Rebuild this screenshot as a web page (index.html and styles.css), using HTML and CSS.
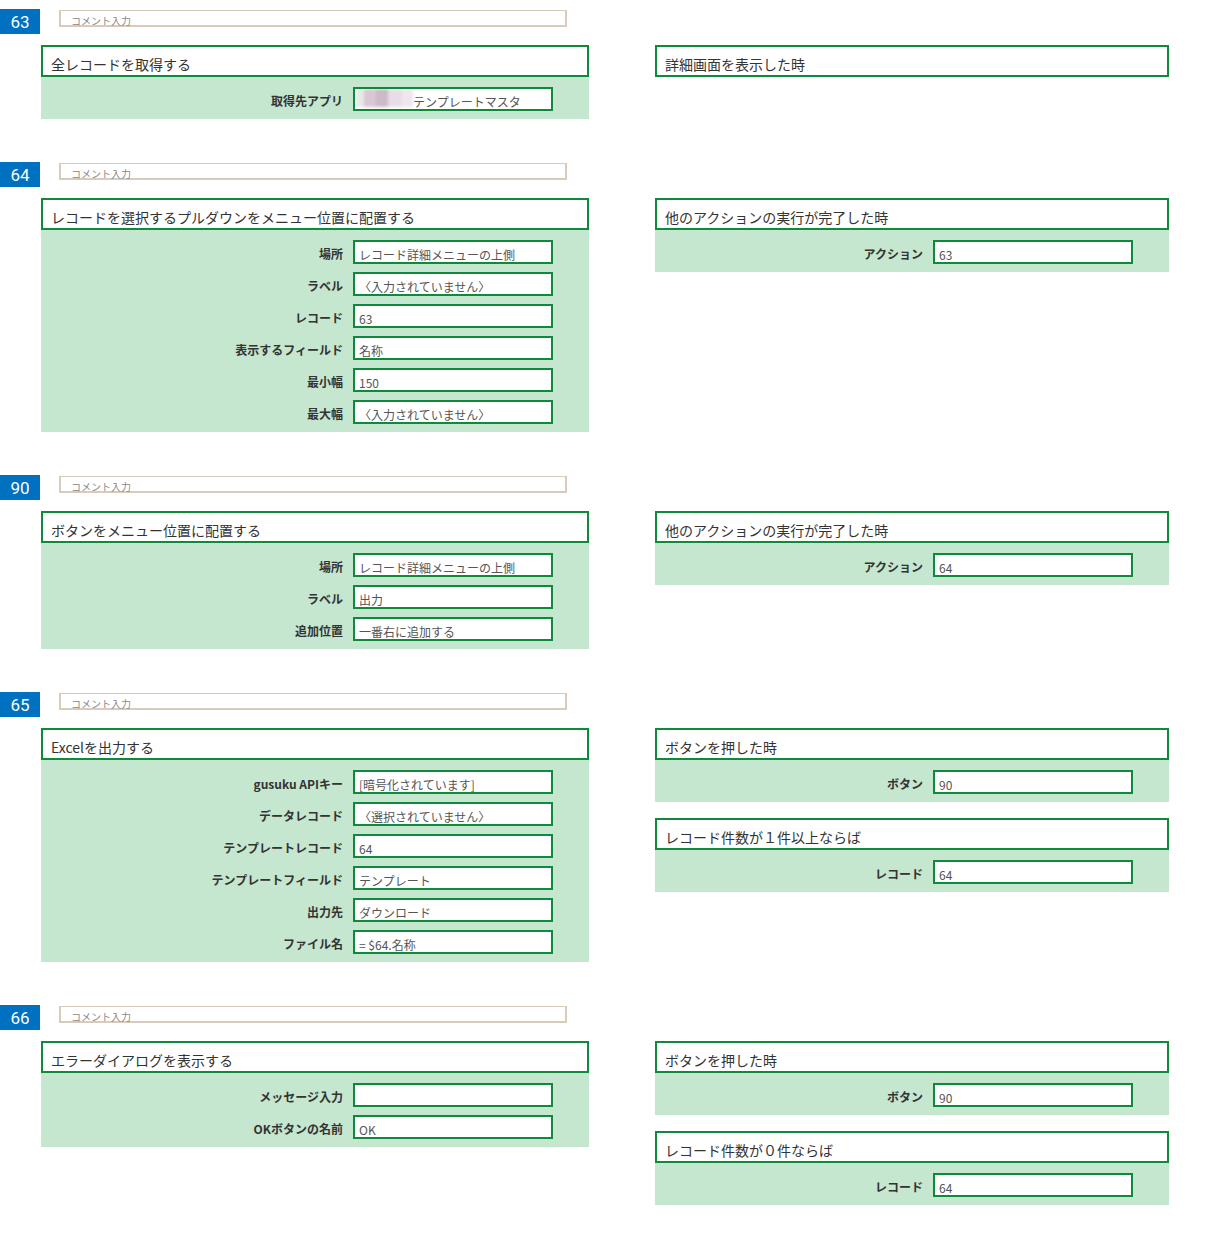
FILE: index.html
```html
<!DOCTYPE html>
<html lang="ja">
<head>
    <meta charset="UTF-8">
    <meta name="viewport" content="width=device-width, initial-scale=1.0">
    <title>アクション一覧</title>
    <link rel="stylesheet" href="styles.css">
</head>
<body>
    <!-- 63 -->
    <section class="step">
        <div class="step-head">
            <span class="step-no">63</span>
            <div class="comment">コメント入力</div>
        </div>
        <div class="step-body">
            <div class="card card-action">
                <div class="card-title">全レコードを取得する</div>
                <div class="card-fields">
                    <div class="field">
                        <span class="field-label">取得先アプリ</span>
                        <div class="field-value"><span class="masked"></span>テンプレートマスタ</div>
                    </div>
                </div>
            </div>
            <div class="triggers">
                <div class="card">
                    <div class="card-title">詳細画面を表示した時</div>
                </div>
            </div>
        </div>
    </section>

    <!-- 64 -->
    <section class="step">
        <div class="step-head">
            <span class="step-no">64</span>
            <div class="comment">コメント入力</div>
        </div>
        <div class="step-body">
            <div class="card card-action">
                <div class="card-title">レコードを選択するプルダウンをメニュー位置に配置する</div>
                <div class="card-fields">
                    <div class="field"><span class="field-label">場所</span><div class="field-value">レコード詳細メニューの上側</div></div>
                    <div class="field"><span class="field-label">ラベル</span><div class="field-value">〈入力されていません〉</div></div>
                    <div class="field"><span class="field-label">レコード</span><div class="field-value">63</div></div>
                    <div class="field"><span class="field-label">表示するフィールド</span><div class="field-value">名称</div></div>
                    <div class="field"><span class="field-label">最小幅</span><div class="field-value">150</div></div>
                    <div class="field"><span class="field-label">最大幅</span><div class="field-value">〈入力されていません〉</div></div>
                </div>
            </div>
            <div class="triggers">
                <div class="card">
                    <div class="card-title">他のアクションの実行が完了した時</div>
                    <div class="card-fields">
                        <div class="field"><span class="field-label">アクション</span><div class="field-value">63</div></div>
                    </div>
                </div>
            </div>
        </div>
    </section>

    <!-- 90 -->
    <section class="step">
        <div class="step-head">
            <span class="step-no">90</span>
            <div class="comment">コメント入力</div>
        </div>
        <div class="step-body">
            <div class="card card-action">
                <div class="card-title">ボタンをメニュー位置に配置する</div>
                <div class="card-fields">
                    <div class="field"><span class="field-label">場所</span><div class="field-value">レコード詳細メニューの上側</div></div>
                    <div class="field"><span class="field-label">ラベル</span><div class="field-value">出力</div></div>
                    <div class="field"><span class="field-label">追加位置</span><div class="field-value">一番右に追加する</div></div>
                </div>
            </div>
            <div class="triggers">
                <div class="card">
                    <div class="card-title">他のアクションの実行が完了した時</div>
                    <div class="card-fields">
                        <div class="field"><span class="field-label">アクション</span><div class="field-value">64</div></div>
                    </div>
                </div>
            </div>
        </div>
    </section>

    <!-- 65 -->
    <section class="step">
        <div class="step-head">
            <span class="step-no">65</span>
            <div class="comment">コメント入力</div>
        </div>
        <div class="step-body">
            <div class="card card-action">
                <div class="card-title">Excelを出力する</div>
                <div class="card-fields">
                    <div class="field"><span class="field-label">gusuku APIキー</span><div class="field-value">[暗号化されています]</div></div>
                    <div class="field"><span class="field-label">データレコード</span><div class="field-value">〈選択されていません〉</div></div>
                    <div class="field"><span class="field-label">テンプレートレコード</span><div class="field-value">64</div></div>
                    <div class="field"><span class="field-label">テンプレートフィールド</span><div class="field-value">テンプレート</div></div>
                    <div class="field"><span class="field-label">出力先</span><div class="field-value">ダウンロード</div></div>
                    <div class="field"><span class="field-label">ファイル名</span><div class="field-value">= $64.名称</div></div>
                </div>
            </div>
            <div class="triggers">
                <div class="card">
                    <div class="card-title">ボタンを押した時</div>
                    <div class="card-fields">
                        <div class="field"><span class="field-label">ボタン</span><div class="field-value">90</div></div>
                    </div>
                </div>
                <div class="card">
                    <div class="card-title">レコード件数が１件以上ならば</div>
                    <div class="card-fields">
                        <div class="field"><span class="field-label">レコード</span><div class="field-value">64</div></div>
                    </div>
                </div>
            </div>
        </div>
    </section>

    <!-- 66 -->
    <section class="step">
        <div class="step-head">
            <span class="step-no">66</span>
            <div class="comment">コメント入力</div>
        </div>
        <div class="step-body">
            <div class="card card-action">
                <div class="card-title">エラーダイアログを表示する</div>
                <div class="card-fields">
                    <div class="field"><span class="field-label">メッセージ入力</span><div class="field-value"></div></div>
                    <div class="field"><span class="field-label">OKボタンの名前</span><div class="field-value">OK</div></div>
                </div>
            </div>
            <div class="triggers">
                <div class="card">
                    <div class="card-title">ボタンを押した時</div>
                    <div class="card-fields">
                        <div class="field"><span class="field-label">ボタン</span><div class="field-value">90</div></div>
                    </div>
                </div>
                <div class="card">
                    <div class="card-title">レコード件数が０件ならば</div>
                    <div class="card-fields">
                        <div class="field"><span class="field-label">レコード</span><div class="field-value">64</div></div>
                    </div>
                </div>
            </div>
        </div>
    </section>
</body>
</html>
```

FILE: styles.css
```css
body {
    margin: 0;
    padding-top: 9px;
    background-color: #fff;
    font-family: "Noto Sans CJK JP", "Noto Sans", sans-serif;
    color: #333;
}
.step {
    margin-bottom: 43px;
}
.step-head {
    display: flex;
    align-items: flex-start;
    height: 25px;
}
.step-no {
    width: 40px;
    height: 25px;
    background-color: #0070c0;
    color: #fff;
    font-family: Roboto, "Noto Sans", sans-serif;
    font-size: 17px;
    line-height: 27px;
    text-align: center;
}
.comment {
    box-sizing: border-box;
    width: 508px;
    height: 17px;
    margin: 1px 0 0 19px;
    padding: 3px 0 0 10px;
    border: 1px solid #d9cbbb;
    border-width: 1px 2px 2px 2px;
    color: #888;
    font-size: 10px;
    line-height: 14px;
}
.step-body {
    display: flex;
    align-items: flex-start;
    margin-top: 11px;
    padding-left: 41px;
    gap: 66px;
}
.card-action {
    width: 548px;
}
.triggers {
    display: flex;
    flex-direction: column;
    gap: 16px;
    width: 514px;
}
.card-title {
    box-sizing: border-box;
    height: 32px;
    padding: 7px 8px 0;
    border: 2px solid #0d8b3b;
    background-color: #fff;
    font-size: 14px;
    line-height: 20px;
    white-space: nowrap;
}
.card-fields {
    display: flex;
    flex-direction: column;
    gap: 8px;
    padding: 10px 36px 8px 0;
    background-color: #c5e6cf;
}
.field {
    display: flex;
    justify-content: flex-end;
    align-items: center;
    height: 24px;
}
.field-label {
    margin-right: 10px;
    padding-top: 3px;
    font-size: 12px;
    font-weight: bold;
    color: #333;
}
.field-value {
    box-sizing: border-box;
    width: 200px;
    height: 24px;
    padding: 4px 0 0 4px;
    border: 2px solid #0d8b3b;
    background-color: #fff;
    color: #555;
    font-size: 12px;
    line-height: 18px;
    white-space: nowrap;
    overflow: hidden;
}
.masked {
    display: inline-block;
    width: 57px;
    height: 18px;
    margin: -4px 0 0 -3px;
    vertical-align: top;
    background: linear-gradient(90deg, #e4ece6 0 8px, #d9c7d3 8px 20px, #cdb9c8 20px 32px, #e8dde6 32px 46px, #efe6ee 46px 57px);
    filter: blur(1.5px);
}
```
